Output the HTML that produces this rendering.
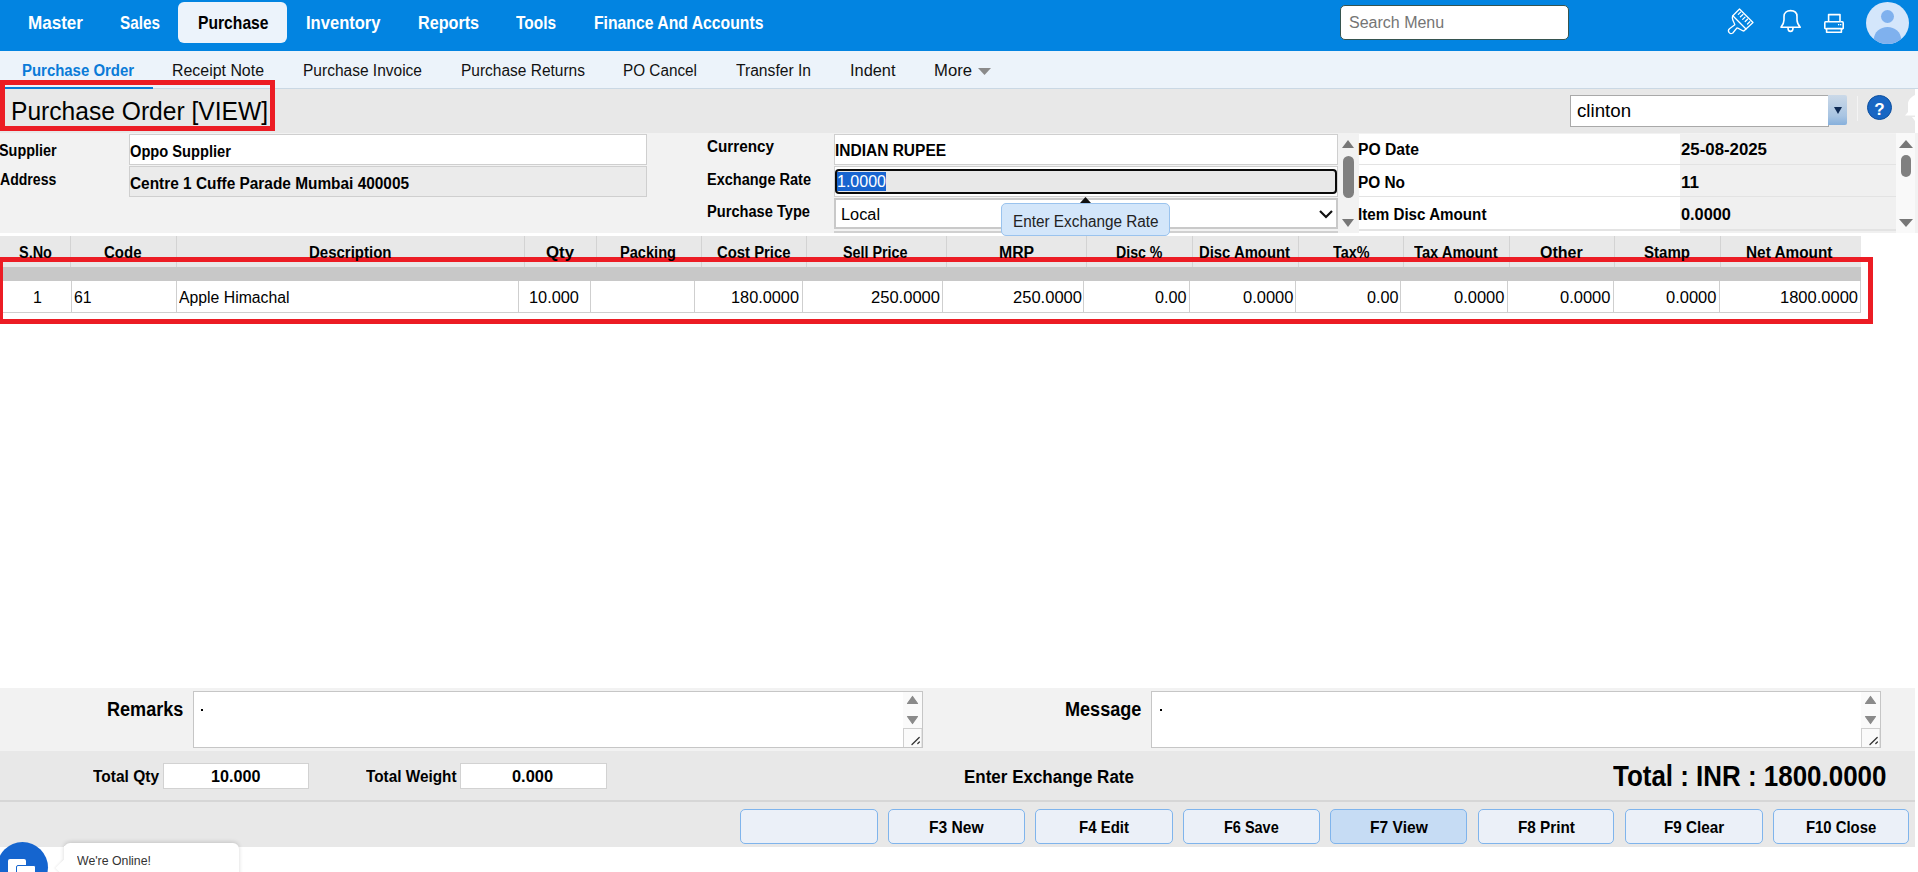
<!DOCTYPE html>
<html><head><meta charset="utf-8">
<style>
*{box-sizing:border-box;margin:0;padding:0}
html,body{width:1918px;height:872px;overflow:hidden;background:#fff;font-family:"Liberation Sans",sans-serif}
.a{position:absolute}
.t{position:absolute;white-space:nowrap;line-height:1;transform-origin:0 0}
</style></head><body>
<!-- top bar -->
<div class="a" style="left:0;top:0;width:1918px;height:51px;background:#0284e1"></div>
<div class="a" style="left:178px;top:2px;width:109px;height:41px;background:#ecf3fb;border-radius:6px"></div>
<div class="a" style="left:1340px;top:5px;width:229px;height:35px;background:#fff;border:1px solid #36544f;border-radius:5px"></div>
<!-- icons -->
<svg class="a" style="left:1720px;top:2px" width="40" height="40" viewBox="1720 2 40 40">
 <g fill="none" stroke="#fff" stroke-width="1.3" stroke-linejoin="round" stroke-linecap="round">
  <path d="M1739.5 9 L1753 22.5 L1746 29 L1732.8 15.8 Z"/>
  <path d="M1738.3 14.4 L1740.6 12.1 M1740.4 16.7 L1742.9 14.4 M1742.7 19.4 L1745 17.1 M1745.2 21.5 L1747.5 19.2 M1747.5 24 L1749.8 21.7"/>
  <path d="M1732.8 15.8 C1731 18 1734 22 1734.8 24.8 L1729.5 28.8 C1727 31 1729.5 35 1732.8 33 L1737 27.8 C1739 28 1742 31 1743.8 31 L1746 29"/>
 </g>
</svg>
<svg class="a" style="left:1770px;top:2px" width="80" height="40" viewBox="1770 2 80 40">
 <g fill="none" stroke="#fff" stroke-width="1.6" stroke-linejoin="round">
  <path d="M1781 27.3 C1782.8 25 1784 23 1784 20 L1784 16.5 C1784 12.5 1787 10.6 1790.5 10.6 C1794 10.6 1797 12.5 1797 16.5 L1797 20 C1797 23 1798.4 25 1800.2 27.3 Z"/>
  <path d="M1788 28 C1788 32.5 1793 32.5 1793 28"/>
  <rect x="1828.6" y="14.6" width="11.4" height="7.2"/>
  <path d="M1828 21.8 L1825.5 21.8 Q1824.8 21.8 1824.8 23 L1824.8 28.2 L1826 29.2 M1841.6 29.2 L1843.2 28.2 L1843.2 23 Q1843.2 21.8 1842.2 21.8 L1840.5 21.8"/>
  <rect x="1826.6" y="28.6" width="14.8" height="3.6"/>
 </g>
 <rect x="1838" y="24" width="1.3" height="1.3" fill="#fff"/><rect x="1840" y="24" width="1.3" height="1.3" fill="#fff"/>
</svg>
<div class="a" style="left:1866px;top:2px;width:43px;height:42px;border-radius:50%;background:#d4e6fb;overflow:hidden">
 <div class="a" style="left:15px;top:8px;width:13px;height:13px;border-radius:50%;background:#7fb1ee"></div>
 <div class="a" style="left:8px;top:25px;width:27px;height:24px;border-radius:50%;background:#7fb1ee"></div>
</div>
<!-- subnav -->
<div class="a" style="left:0;top:51px;width:1918px;height:38px;background:#ecf3fa;border-bottom:1px solid #cad8e4"></div>
<div class="a" style="left:0;top:87px;width:153px;height:2px;background:#0a7bd8"></div>
<svg class="a" style="left:977px;top:67px" width="15" height="9"><path d="M1 1 L14 1 L7.5 8 Z" fill="#8a8a8a"/></svg>
<!-- title area -->
<div class="a" style="left:0;top:89px;width:1918px;height:44px;background:#e8e8e8"></div>
<div class="a" style="left:1570px;top:95px;width:259px;height:32px;background:#fff;border:1px solid #a9a9a9"></div>
<div class="a" style="left:1828px;top:95px;width:19px;height:30px;background:linear-gradient(#cbd9e8,#a8c4e2 70%,#86b0dc);border-radius:0 2px 2px 0"></div>
<svg class="a" style="left:1832px;top:104px" width="12" height="12"><path d="M2 3 L10 3 L6 10 Z" fill="#0f2b55"/></svg>
<div class="a" style="left:1857px;top:96px;width:1px;height:25px;background:#f4f4f4"></div>
<div class="a" style="left:1867px;top:95px;width:25px;height:25px;border-radius:50%;background:#1866c3;border:1px solid #0d4f9e;color:#fff;font:bold 17px/27px 'Liberation Sans',sans-serif;text-align:center">?</div>
<svg class="a" style="left:1900px;top:90px" width="18" height="35" viewBox="1900 90 18 35"><path d="M1915 95 C1911 97 1908 100 1908 104 L1908 112 L1905 115.5 L1915 115.5 Z M1912 117 L1915 117 L1915 121 Z" fill="#fff"/></svg>
<div class="a" style="left:1915px;top:89px;width:3px;height:147px;background:#fff"></div>
<!-- form area -->
<div class="a" style="left:0;top:133px;width:1918px;height:100px;background:#f2f2f2"></div>
<div class="a" style="left:129px;top:134px;width:518px;height:31px;background:#fff;border:1px solid #cfcfcf"></div>
<div class="a" style="left:129px;top:166px;width:518px;height:31px;background:#ebebeb;border:1px solid #cfcfcf"></div>
<div class="a" style="left:834px;top:134px;width:504px;height:31px;background:#fff;border:1px solid #cfcfcf"></div>
<div class="a" style="left:834px;top:166px;width:504px;height:31px;background:#fff;border:1px solid #cfcfcf"></div>
<div class="a" style="left:835px;top:169px;width:502px;height:25px;background:#e8e8e8;border:2.5px solid #0a0a0a;border-radius:4px"></div>
<div class="a" style="left:837px;top:172px;width:49px;height:19px;background:#1864cf"></div>
<div class="a" style="left:834px;top:198px;width:504px;height:31px;background:#fff;border:2px solid #c9c9c9"></div>
<div class="a" style="left:834px;top:231px;width:504px;height:2px;background:#d0d0d0"></div>
<svg class="a" style="left:1318px;top:207px" width="16" height="14"><path d="M2 4 L8 10 L14 4" fill="none" stroke="#111" stroke-width="2.2"/></svg>
<!-- center scrollbar -->
<svg class="a" style="left:1340px;top:137px" width="16" height="94">
 <path d="M2 11 L8 3 L14 11 Z" fill="#777"/>
 <rect x="3" y="19" width="11" height="42" rx="5.5" fill="#808080"/>
 <path d="M2 82 L8 90 L14 82 Z" fill="#777"/>
</svg>
<!-- tooltip -->
<div class="a" style="left:1001px;top:203px;width:169px;height:33px;background:#d3e6fa;border:1px solid #9ac3ee;border-radius:5px"></div>
<svg class="a" style="left:1079px;top:196px" width="13" height="8"><path d="M1 7 L6.5 1 L12 7 Z" fill="#111"/></svg>
<!-- right panel -->
<div class="a" style="left:1359px;top:134px;width:321px;height:99px;background:#fff"></div>
<div class="a" style="left:1680px;top:134px;width:216px;height:99px;background:#f0f0f0"></div>
<div class="a" style="left:1359px;top:164px;width:537px;height:1px;background:#e3e3e3"></div>
<div class="a" style="left:1359px;top:196px;width:537px;height:1px;background:#e3e3e3"></div>
<div class="a" style="left:1359px;top:229px;width:537px;height:2px;background:#e3e3e3"></div>
<div class="a" style="left:1896px;top:133px;width:19px;height:100px;background:#f9f9f9"></div>
<svg class="a" style="left:1897px;top:137px" width="18" height="94">
 <path d="M2 11 L9 3 L16 11 Z" fill="#777"/>
 <rect x="4" y="18" width="10" height="22" rx="5" fill="#808080"/>
 <path d="M2 82 L9 90 L16 82 Z" fill="#777"/>
</svg>
<!-- table -->
<div class="a" style="left:0;top:236px;width:1861px;height:31px;background:#e8e8e8"></div>
<div id="hdiv"></div>
<div class="a" style="left:0;top:267px;width:1861px;height:14px;background:#c8c8c8"></div>
<div class="a" style="left:0;top:281px;width:1861px;height:32px;background:#fff;border-bottom:1px solid #cfcfcf;border-right:1px solid #cfcfcf"></div>
<div class="a" style="left:70px;top:236px;width:1px;height:31px;background:#d3d3d3"></div><div class="a" style="left:176px;top:236px;width:1px;height:31px;background:#d3d3d3"></div><div class="a" style="left:524px;top:236px;width:1px;height:31px;background:#d3d3d3"></div><div class="a" style="left:596px;top:236px;width:1px;height:31px;background:#d3d3d3"></div><div class="a" style="left:701px;top:236px;width:1px;height:31px;background:#d3d3d3"></div><div class="a" style="left:806px;top:236px;width:1px;height:31px;background:#d3d3d3"></div><div class="a" style="left:946px;top:236px;width:1px;height:31px;background:#d3d3d3"></div><div class="a" style="left:1086px;top:236px;width:1px;height:31px;background:#d3d3d3"></div><div class="a" style="left:1192px;top:236px;width:1px;height:31px;background:#d3d3d3"></div><div class="a" style="left:1298px;top:236px;width:1px;height:31px;background:#d3d3d3"></div><div class="a" style="left:1403px;top:236px;width:1px;height:31px;background:#d3d3d3"></div><div class="a" style="left:1509px;top:236px;width:1px;height:31px;background:#d3d3d3"></div><div class="a" style="left:1614px;top:236px;width:1px;height:31px;background:#d3d3d3"></div><div class="a" style="left:1720px;top:236px;width:1px;height:31px;background:#d3d3d3"></div><div class="a" style="left:71px;top:281px;width:1px;height:31px;background:#cfcfcf"></div><div class="a" style="left:176px;top:281px;width:1px;height:31px;background:#cfcfcf"></div><div class="a" style="left:518px;top:281px;width:1px;height:31px;background:#cfcfcf"></div><div class="a" style="left:590px;top:281px;width:1px;height:31px;background:#cfcfcf"></div><div class="a" style="left:694px;top:281px;width:1px;height:31px;background:#cfcfcf"></div><div class="a" style="left:802px;top:281px;width:1px;height:31px;background:#cfcfcf"></div><div class="a" style="left:942px;top:281px;width:1px;height:31px;background:#cfcfcf"></div><div class="a" style="left:1083px;top:281px;width:1px;height:31px;background:#cfcfcf"></div><div class="a" style="left:1189px;top:281px;width:1px;height:31px;background:#cfcfcf"></div><div class="a" style="left:1295px;top:281px;width:1px;height:31px;background:#cfcfcf"></div><div class="a" style="left:1400px;top:281px;width:1px;height:31px;background:#cfcfcf"></div><div class="a" style="left:1507px;top:281px;width:1px;height:31px;background:#cfcfcf"></div><div class="a" style="left:1613px;top:281px;width:1px;height:31px;background:#cfcfcf"></div><div class="a" style="left:1719px;top:281px;width:1px;height:31px;background:#cfcfcf"></div>
<!-- red boxes -->
<div class="a" style="left:0;top:80px;width:275px;height:51px;border:5px solid #ec1c24"></div>
<div class="a" style="left:-2px;top:257px;width:1875px;height:67px;border:5px solid #ec1c24"></div>
<!-- remarks -->
<div class="a" style="left:0;top:688px;width:1915px;height:63px;background:#f2f2f2"></div>
<div class="a" style="left:193px;top:691px;width:730px;height:57px;background:#fff;border:1px solid #c6c6c6"></div>
<div class="a" style="left:1151px;top:691px;width:730px;height:57px;background:#fff;border:1px solid #c6c6c6"></div>
<div class="a" style="left:201px;top:709px;width:2px;height:2px;background:#000"></div>
<div class="a" style="left:1160px;top:709px;width:2px;height:2px;background:#000"></div>
<svg class="a" style="left:903px;top:692px" width="19" height="55" viewBox="0 0 19 55">
 <rect x="0" y="0" width="19" height="36" fill="#fafafa"/>
 <path d="M4.5 11.5 L9.5 4.5 L14.5 11.5 Z M4.5 24.5 L9.5 31.5 L14.5 24.5 Z" fill="#8a8a8a" stroke="#8a8a8a" stroke-width="1.2" stroke-linejoin="round"/>
 <rect x="0.5" y="36.5" width="18.5" height="19" fill="#fafafa" stroke="#cfcfcf"/>
 <path d="M9 52.5 L16.2 45.5 M14.8 51.5 L16.4 50" stroke="#333" stroke-width="1.3" stroke-linecap="round"/>
</svg>
<svg class="a" style="left:1861px;top:692px" width="19" height="55" viewBox="0 0 19 55">
 <rect x="0" y="0" width="19" height="36" fill="#fafafa"/>
 <path d="M4.5 11.5 L9.5 4.5 L14.5 11.5 Z M4.5 24.5 L9.5 31.5 L14.5 24.5 Z" fill="#8a8a8a" stroke="#8a8a8a" stroke-width="1.2" stroke-linejoin="round"/>
 <rect x="0.5" y="36.5" width="18.5" height="19" fill="#fafafa" stroke="#cfcfcf"/>
 <path d="M9 52.5 L16.2 45.5 M14.8 51.5 L16.4 50" stroke="#333" stroke-width="1.3" stroke-linecap="round"/>
</svg>
<!-- totals -->
<div class="a" style="left:0;top:751px;width:1915px;height:96px;background:#e8e8e8"></div>
<div class="a" style="left:0;top:800px;width:1915px;height:1.5px;background:#d6d6d6"></div>
<div class="a" style="left:163px;top:763px;width:146px;height:26px;background:#fff;border:1px solid #d2d2d2"></div>
<div class="a" style="left:460px;top:763px;width:147px;height:26px;background:#fff;border:1px solid #d2d2d2"></div>
<!-- buttons -->
<div id="btns"></div>
<div class="a" style="left:740px;top:809px;width:138px;height:35px;background:#ebf0f8;border:1.5px solid #7fb4ec;border-radius:5px"></div><div class="a" style="left:888px;top:809px;width:137px;height:35px;background:#ebf0f8;border:1.5px solid #7fb4ec;border-radius:5px"></div><div class="a" style="left:1035px;top:809px;width:138px;height:35px;background:#ebf0f8;border:1.5px solid #7fb4ec;border-radius:5px"></div><div class="a" style="left:1183px;top:809px;width:137px;height:35px;background:#ebf0f8;border:1.5px solid #7fb4ec;border-radius:5px"></div><div class="a" style="left:1330px;top:809px;width:137px;height:35px;background:#c6dcf4;border:1.5px solid #7fb4ec;border-radius:5px"></div><div class="a" style="left:1478px;top:809px;width:136px;height:35px;background:#ebf0f8;border:1.5px solid #7fb4ec;border-radius:5px"></div><div class="a" style="left:1625px;top:809px;width:138px;height:35px;background:#ebf0f8;border:1.5px solid #7fb4ec;border-radius:5px"></div><div class="a" style="left:1773px;top:809px;width:136px;height:35px;background:#ebf0f8;border:1.5px solid #7fb4ec;border-radius:5px"></div>
<!-- chat -->
<div class="a" style="left:64px;top:843px;width:175px;height:40px;background:#fff;border-radius:6px;box-shadow:0 -1px 4px rgba(0,0,0,.16)"></div>
<div class="a" style="left:58px;top:862px;width:12px;height:12px;background:#fff;transform:rotate(45deg);box-shadow:-1px 1px 2px rgba(0,0,0,.06)"></div>
<div class="a" style="left:64px;top:846px;width:14px;height:30px;background:#fff"></div>
<div class="a" style="left:-3px;top:842px;width:51px;height:51px;border-radius:50%;background:#1565cf"></div>
<div class="a" style="left:8px;top:859px;width:18px;height:20px;background:#fff;border-radius:2px"></div>
<div class="a" style="left:16px;top:865px;width:20px;height:12px;background:#fff;border:1px solid #1565cf;border-radius:2px"></div>
<span class="t" style="left:28.0px;top:13.3px;font-size:19px;font-weight:bold;color:#fff;transform:scaleX(0.8980);">Master</span>
<span class="t" style="left:120.0px;top:13.3px;font-size:19px;font-weight:bold;color:#fff;transform:scaleX(0.8060);">Sales</span>
<span class="t" style="left:197.5px;top:13.3px;font-size:19px;font-weight:bold;color:#000;transform:scaleX(0.8246);">Purchase</span>
<span class="t" style="left:306.0px;top:13.3px;font-size:19px;font-weight:bold;color:#fff;transform:scaleX(0.8713);">Inventory</span>
<span class="t" style="left:418.0px;top:13.3px;font-size:19px;font-weight:bold;color:#fff;transform:scaleX(0.8502);">Reports</span>
<span class="t" style="left:516.0px;top:13.3px;font-size:19px;font-weight:bold;color:#fff;transform:scaleX(0.8122);">Tools</span>
<span class="t" style="left:594.0px;top:13.3px;font-size:19px;font-weight:bold;color:#fff;transform:scaleX(0.8289);">Finance And Accounts</span>
<span class="t" style="left:1349.0px;top:14.5px;font-size:16px;font-weight:normal;color:#757575;">Search Menu</span>
<span class="t" style="left:22.0px;top:62.5px;font-size:16px;font-weight:bold;color:#0a7bd8;transform:scaleX(0.9333);">Purchase Order</span>
<span class="t" style="left:172.0px;top:62.5px;font-size:16px;font-weight:normal;color:#111;transform:scaleX(0.9946);">Receipt Note</span>
<span class="t" style="left:303.0px;top:62.5px;font-size:16px;font-weight:normal;color:#111;transform:scaleX(0.9695);">Purchase Invoice</span>
<span class="t" style="left:461.0px;top:62.5px;font-size:16px;font-weight:normal;color:#111;transform:scaleX(0.9678);">Purchase Returns</span>
<span class="t" style="left:623.0px;top:62.5px;font-size:16px;font-weight:normal;color:#111;transform:scaleX(0.9564);">PO Cancel</span>
<span class="t" style="left:736.0px;top:62.5px;font-size:16px;font-weight:normal;color:#111;transform:scaleX(0.9772);">Transfer In</span>
<span class="t" style="left:850.0px;top:62.5px;font-size:16px;font-weight:normal;color:#111;transform:scaleX(1.0225);">Indent</span>
<span class="t" style="left:934.0px;top:62.5px;font-size:16px;font-weight:normal;color:#111;transform:scaleX(1.0411);">More</span>
<span class="t" style="left:11.0px;top:98.0px;font-size:26px;font-weight:normal;color:#000;transform:scaleX(0.9462);">Purchase Order [VIEW]</span>
<span class="t" style="left:1577.0px;top:101.8px;font-size:18px;font-weight:normal;color:#000;transform:scaleX(1.0385);">clinton</span>
<span class="t" style="left:-1.0px;top:142.5px;font-size:16px;font-weight:bold;color:#000;transform:scaleX(0.9000);">Supplier</span>
<span class="t" style="left:0.0px;top:171.5px;font-size:16px;font-weight:bold;color:#000;transform:scaleX(0.8797);">Address</span>
<span class="t" style="left:130.0px;top:143.5px;font-size:16px;font-weight:bold;color:#000;transform:scaleX(0.9161);">Oppo Supplier</span>
<span class="t" style="left:130.0px;top:175.5px;font-size:16px;font-weight:bold;color:#000;transform:scaleX(0.9625);">Centre 1 Cuffe Parade Mumbai 400005</span>
<span class="t" style="left:707.0px;top:138.5px;font-size:16px;font-weight:bold;color:#000;transform:scaleX(0.9537);">Currency</span>
<span class="t" style="left:707.0px;top:171.5px;font-size:16px;font-weight:bold;color:#000;transform:scaleX(0.9063);">Exchange Rate</span>
<span class="t" style="left:707.0px;top:203.5px;font-size:16px;font-weight:bold;color:#000;transform:scaleX(0.9145);">Purchase Type</span>
<span class="t" style="left:835.0px;top:142.5px;font-size:16px;font-weight:bold;color:#000;transform:scaleX(0.9684);">INDIAN RUPEE</span>
<span class="t" style="left:837.0px;top:173.5px;font-size:16px;font-weight:normal;color:#fff;">1.0000</span>
<span class="t" style="left:841.0px;top:206.5px;font-size:16px;font-weight:normal;color:#000;transform:scaleX(1.0196);">Local</span>
<span class="t" style="left:1013.0px;top:213.5px;font-size:16px;font-weight:normal;color:#222;transform:scaleX(0.9571);">Enter Exchange Rate</span>
<span class="t" style="left:1358.0px;top:141.5px;font-size:16px;font-weight:bold;color:#000;transform:scaleX(0.9799);">PO Date</span>
<span class="t" style="left:1681.0px;top:141.5px;font-size:16px;font-weight:bold;color:#000;transform:scaleX(1.0504);">25-08-2025</span>
<span class="t" style="left:1358.0px;top:174.5px;font-size:16px;font-weight:bold;color:#000;transform:scaleX(0.9616);">PO No</span>
<span class="t" style="left:1681.0px;top:174.5px;font-size:16px;font-weight:bold;color:#000;transform:scaleX(1.0667);">11</span>
<span class="t" style="left:1358.0px;top:206.5px;font-size:16px;font-weight:bold;color:#000;transform:scaleX(0.9485);">Item Disc Amount</span>
<span class="t" style="left:1681.0px;top:206.5px;font-size:16px;font-weight:bold;color:#000;transform:scaleX(1.0204);">0.0000</span>
<span class="t" style="left:18.5px;top:244.5px;font-size:16px;font-weight:bold;color:#000;transform:scaleX(0.9041);">S.No</span>
<span class="t" style="left:104.0px;top:244.5px;font-size:16px;font-weight:bold;color:#000;transform:scaleX(0.9375);">Code</span>
<span class="t" style="left:308.5px;top:244.5px;font-size:16px;font-weight:bold;color:#000;transform:scaleX(0.9375);">Description</span>
<span class="t" style="left:546.0px;top:244.5px;font-size:16px;font-weight:bold;color:#000;transform:scaleX(1.0516);">Qty</span>
<span class="t" style="left:620.0px;top:244.5px;font-size:16px;font-weight:bold;color:#000;transform:scaleX(0.9124);">Packing</span>
<span class="t" style="left:716.5px;top:244.5px;font-size:16px;font-weight:bold;color:#000;transform:scaleX(0.9289);">Cost Price</span>
<span class="t" style="left:843.0px;top:244.5px;font-size:16px;font-weight:bold;color:#000;transform:scaleX(0.8958);">Sell Price</span>
<span class="t" style="left:999.0px;top:244.5px;font-size:16px;font-weight:bold;color:#000;transform:scaleX(0.9859);">MRP</span>
<span class="t" style="left:1116.0px;top:244.5px;font-size:16px;font-weight:bold;color:#000;transform:scaleX(0.8857);">Disc %</span>
<span class="t" style="left:1199.0px;top:244.5px;font-size:16px;font-weight:bold;color:#000;transform:scaleX(0.9274);">Disc Amount</span>
<span class="t" style="left:1332.5px;top:244.5px;font-size:16px;font-weight:bold;color:#000;transform:scaleX(0.8985);">Tax%</span>
<span class="t" style="left:1414.0px;top:244.5px;font-size:16px;font-weight:bold;color:#000;transform:scaleX(0.9214);">Tax Amount</span>
<span class="t" style="left:1540.0px;top:244.5px;font-size:16px;font-weight:bold;color:#000;">Other</span>
<span class="t" style="left:1644.0px;top:244.5px;font-size:16px;font-weight:bold;color:#000;transform:scaleX(0.9412);">Stamp</span>
<span class="t" style="left:1746.0px;top:244.5px;font-size:16px;font-weight:bold;color:#000;transform:scaleX(0.9598);">Net Amount</span>
<span class="t" style="left:33.0px;top:289.5px;font-size:16px;font-weight:normal;color:#000;">1</span>
<span class="t" style="left:74.0px;top:289.5px;font-size:16px;font-weight:normal;color:#000;transform:scaleX(0.9859);">61</span>
<span class="t" style="left:178.5px;top:289.5px;font-size:16px;font-weight:normal;color:#000;transform:scaleX(0.9866);">Apple Himachal</span>
<span class="t" style="left:529.0px;top:289.5px;font-size:16px;font-weight:normal;color:#000;transform:scaleX(1.0204);">10.000</span>
<span class="t" style="left:731.0px;top:289.5px;font-size:16px;font-weight:normal;color:#000;transform:scaleX(1.0187);">180.0000</span>
<span class="t" style="left:871.0px;top:289.5px;font-size:16px;font-weight:normal;color:#000;transform:scaleX(1.0337);">250.0000</span>
<span class="t" style="left:1012.5px;top:289.5px;font-size:16px;font-weight:normal;color:#000;transform:scaleX(1.0337);">250.0000</span>
<span class="t" style="left:1155.0px;top:289.5px;font-size:16px;font-weight:normal;color:#000;transform:scaleX(1.0120);">0.00</span>
<span class="t" style="left:1242.5px;top:289.5px;font-size:16px;font-weight:normal;color:#000;transform:scaleX(1.0306);">0.0000</span>
<span class="t" style="left:1366.5px;top:289.5px;font-size:16px;font-weight:normal;color:#000;transform:scaleX(1.0120);">0.00</span>
<span class="t" style="left:1454.0px;top:289.5px;font-size:16px;font-weight:normal;color:#000;transform:scaleX(1.0306);">0.0000</span>
<span class="t" style="left:1560.0px;top:289.5px;font-size:16px;font-weight:normal;color:#000;transform:scaleX(1.0306);">0.0000</span>
<span class="t" style="left:1666.0px;top:289.5px;font-size:16px;font-weight:normal;color:#000;transform:scaleX(1.0306);">0.0000</span>
<span class="t" style="left:1780.0px;top:289.5px;font-size:16px;font-weight:normal;color:#000;transform:scaleX(1.0314);">1800.0000</span>
<span class="t" style="left:106.6px;top:699.1px;font-size:20px;font-weight:bold;color:#000;transform:scaleX(0.9041);">Remarks</span>
<span class="t" style="left:1065.0px;top:699.1px;font-size:20px;font-weight:bold;color:#000;transform:scaleX(0.9041);">Message</span>
<span class="t" style="left:93.0px;top:769.0px;font-size:16px;font-weight:bold;color:#000;transform:scaleX(0.9688);">Total Qty</span>
<span class="t" style="left:211.0px;top:769.0px;font-size:16px;font-weight:bold;color:#000;transform:scaleX(1.0102);">10.000</span>
<span class="t" style="left:365.5px;top:769.0px;font-size:16px;font-weight:bold;color:#000;transform:scaleX(0.9577);">Total Weight</span>
<span class="t" style="left:512.0px;top:769.0px;font-size:16px;font-weight:bold;color:#000;transform:scaleX(1.0250);">0.000</span>
<span class="t" style="left:964.0px;top:767.8px;font-size:18px;font-weight:bold;color:#000;transform:scaleX(0.9438);">Enter Exchange Rate</span>
<span class="t" style="left:1613.0px;top:761.5px;font-size:29px;font-weight:bold;color:#000;transform:scaleX(0.8945);">Total : INR : 1800.0000</span>
<span class="t" style="left:928.6px;top:818.6px;font-size:17px;font-weight:bold;color:#000;transform:scaleX(0.9191);">F3 New</span>
<span class="t" style="left:1078.8px;top:818.6px;font-size:17px;font-weight:bold;color:#000;transform:scaleX(0.8830);">F4 Edit</span>
<span class="t" style="left:1223.6px;top:818.6px;font-size:17px;font-weight:bold;color:#000;transform:scaleX(0.8514);">F6 Save</span>
<span class="t" style="left:1369.6px;top:818.6px;font-size:17px;font-weight:bold;color:#000;transform:scaleX(0.9172);">F7 View</span>
<span class="t" style="left:1517.6px;top:818.6px;font-size:17px;font-weight:bold;color:#000;transform:scaleX(0.8996);">F8 Print</span>
<span class="t" style="left:1663.6px;top:818.6px;font-size:17px;font-weight:bold;color:#000;transform:scaleX(0.8953);">F9 Clear</span>
<span class="t" style="left:1806.0px;top:818.6px;font-size:17px;font-weight:bold;color:#000;transform:scaleX(0.8747);">F10 Close</span>
<span class="t" style="left:77.0px;top:854.8px;font-size:12px;font-weight:normal;color:#333;transform:scaleX(1.0260);">We're Online!</span>
</body></html>
